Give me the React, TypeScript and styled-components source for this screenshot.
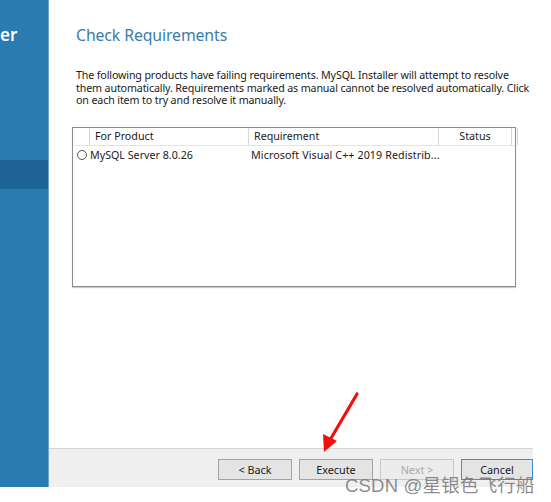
import React from "react";
import styled, { createGlobalStyle } from "styled-components";

const Global = createGlobalStyle`
  html, body { margin: 0; padding: 0; background: #ffffff; }
  body { width: 551px; height: 502px; overflow: hidden; font-family: "Noto Sans", "Open Sans", sans-serif; }
  #root { width: 551px; height: 502px; position: relative; }
`;

const Page = styled.div`
  position: relative;
  width: 551px;
  height: 502px;
  background: #ffffff;
`;

const Window = styled.div`
  display: flex;
  width: 533px;
  height: 487px;
  overflow: hidden;
`;

const Sidebar = styled.div`
  width: 48px;
  flex: none;
  background: #2a7bb2;
  border-right: 1px solid #6aa7d0;
  display: flex;
  flex-direction: column;
  overflow: hidden;
`;

const SideTitle = styled.div`
  height: 28px;
  margin-top: 24px;
  color: #ffffff;
  font-size: 17px;
  font-weight: 600;
  line-height: 22px;
  white-space: nowrap;
`;

const SideItem = styled.div<{ $active?: boolean }>`
  height: 29px;
  margin-top: ${(p) => (p.$active ? "108px" : "0")};
  background: ${(p) => (p.$active ? "#1d6395" : "transparent")};
`;

const Right = styled.div`
  width: 484px;
  flex: none;
  display: flex;
  flex-direction: column;
  min-width: 0;
`;

const Main = styled.div`
  flex: 1;
  padding: 24px 0 0 27px;
  display: flex;
  flex-direction: column;
`;

const Title = styled.h1`
  margin: 0;
  font-size: 15.8px;
  font-weight: 400;
  color: #3a7cab;
  line-height: 22px;
  letter-spacing: -0.1px;
`;

const Desc = styled.p`
  margin: 23px 0 0 0;
  font-size: 10.7px;
  line-height: 12.6px;
  color: #1a1a1a;
  width: 454px;
  letter-spacing: -0.14px;
`;

const Table = styled.div`
  margin: 20px 0 0 -4px;
  width: 442px;
  height: 158px;
  border: 1px solid #8c8c8c;
  background: #ffffff;
  box-shadow: 0 1px 1px rgba(0, 0, 0, 0.2);
  display: flex;
  flex-direction: column;
`;

const HeaderRow = styled.div`
  display: grid;
  grid-template-columns: 17px 159px 190px 73px 1fr;
  height: 17px;
  border-bottom: 1px solid #e4e4e4;
`;

const HeadCell = styled.div<{ $center?: boolean }>`
  border-right: 1px solid #d6d6d6;
  font-size: 10.7px;
  line-height: 17px;
  color: #1a1a1a;
  padding-left: ${(p) => (p.$center ? "0" : "5px")};
  text-align: ${(p) => (p.$center ? "center" : "left")};
  white-space: nowrap;
  overflow: hidden;
`;

const BodyRow = styled.div`
  display: grid;
  grid-template-columns: 176px 1fr;
  height: 18px;
  align-items: center;
  font-size: 10.7px;
  color: #1a1a1a;
  white-space: nowrap;
`;

const ProductCell = styled.div`
  display: flex;
  align-items: center;
  gap: 3px;
  padding-left: 4px;
`;

const Radio = styled.span`
  width: 10px;
  height: 10px;
  border: 1px solid #555;
  border-radius: 50%;
  box-sizing: border-box;
  display: inline-block;
`;

const ReqCell = styled.div`
  padding-left: 2px;
  letter-spacing: 0.1px;
`;

const Footer = styled.div`
  height: 39px;
  flex: none;
  background: #efefef;
  border-top: 1px solid #d4d4d4;
  display: flex;
  align-items: center;
  justify-content: flex-end;
  gap: 7px;
  padding-top: 2px;
  box-sizing: border-box;
`;

const Button = styled.button<{ $disabled?: boolean; $focus?: boolean }>`
  width: 74px;
  height: 21px;
  box-sizing: border-box;
  font-family: "Noto Sans", "Open Sans", sans-serif;
  font-size: 10.8px;
  padding: 0;
  color: ${(p) => (p.$disabled ? "#a8a8a8" : "#1a1a1a")};
  border: 1px solid ${(p) => (p.$focus ? "#3c8fd6" : p.$disabled ? "#c8c8c8" : "#a3a3a3")};
  background: ${(p) => (p.$disabled ? "#ececec" : "#e4e4e4")};
  &:last-child { width: 72px; }
`;

const Arrow = styled.svg`
  position: absolute;
  left: 318px;
  top: 390px;
  width: 45px;
  height: 66px;
  pointer-events: none;
`;

const Watermark = styled.div`
  position: absolute;
  left: 345px;
  top: 475px;
  font-family: "Liberation Sans", "Noto Sans CJK SC", sans-serif;
  font-size: 18.5px;
  line-height: 22px;
  color: rgba(120, 120, 120, 0.85);
  white-space: nowrap;
  letter-spacing: 0.2px;
`;

export default function App() {
  return (
    <Page>
      <Global />
      <Window>
        <Sidebar>
          <SideTitle>er</SideTitle>
          <SideItem $active />
        </Sidebar>
        <Right>
          <Main>
            <Title>Check Requirements</Title>
            <Desc>
              The following products have failing requirements. MySQL Installer will attempt to resolve
              them automatically. Requirements marked as manual cannot be resolved automatically. Click
              on each item to try and resolve it manually.
            </Desc>
            <Table>
              <HeaderRow>
                <HeadCell />
                <HeadCell>For Product</HeadCell>
                <HeadCell>Requirement</HeadCell>
                <HeadCell $center>Status</HeadCell>
                <HeadCell />
              </HeaderRow>
              <BodyRow>
                <ProductCell>
                  <Radio />
                  MySQL Server 8.0.26
                </ProductCell>
                <ReqCell>Microsoft Visual C++ 2019 Redistrib...</ReqCell>
              </BodyRow>
            </Table>
          </Main>
          <Footer>
            <Button>&lt; Back</Button>
            <Button>Execute</Button>
            <Button $disabled>Next &gt;</Button>
            <Button $focus>Cancel</Button>
          </Footer>
        </Right>
      </Window>
      <Arrow viewBox="0 0 45 66">
        <line x1="39" y1="4" x2="12" y2="50" stroke="#f01010" strokeWidth="3.2" strokeLinecap="round" />
        <polygon points="6,62 5,44 19,51" fill="#f01010" />
      </Arrow>
      <Watermark>CSDN @星银色飞行船</Watermark>
    </Page>
  );
}
